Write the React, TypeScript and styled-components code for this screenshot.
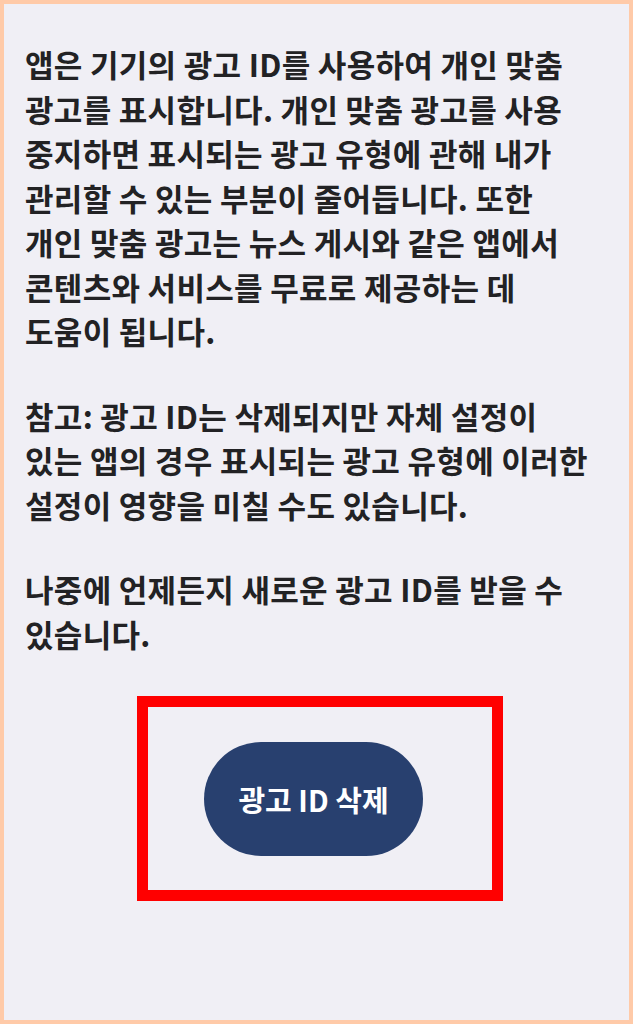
import React from "react";
import styled, { createGlobalStyle } from "styled-components";

const Global = createGlobalStyle`
  html, body { margin: 0; padding: 0; }
  body { background: #FFCAA8; }
`;

const Frame = styled.div`
  box-sizing: border-box;
  width: 633px;
  height: 1024px;
  border: 4px solid #FFCAA8;
  background: #F0EFF5;
  padding: 38px 0 0 21px;
  display: flex;
  flex-direction: column;
  font-family: "Noto Sans CJK KR", "Noto Sans", sans-serif;
  overflow: hidden;
`;

const Paragraph = styled.p`
  margin: 0 0 40px 0;
  font-size: 31px;
  line-height: 44.5px;
  font-weight: 700;
  color: #222224;
  letter-spacing: 0.3px;
`;

const Line = styled.span`
  display: block;
  white-space: nowrap;
`;

const Highlight = styled.div`
  align-self: flex-start;
  margin-left: 112px;
  box-sizing: border-box;
  width: 366px;
  height: 205px;
  border: 11px solid #FF0000;
  display: flex;
  align-items: center;
  padding-left: 56px;
`;

const PillButton = styled.button`
  width: 219px;
  height: 114px;
  padding: 0;
  border: none;
  border-radius: 57px;
  background: #28406F;
  color: #FFFFFF;
  font-family: "Noto Sans CJK KR", "Noto Sans", sans-serif;
  font-size: 29px;
  font-weight: 700;
  letter-spacing: 0;
  cursor: pointer;
`;

const paragraphs: string[][] = [
  [
    "앱은 기기의 광고 ID를 사용하여 개인 맞춤",
    "광고를 표시합니다. 개인 맞춤 광고를 사용",
    "중지하면 표시되는 광고 유형에 관해 내가",
    "관리할 수 있는 부분이 줄어듭니다. 또한",
    "개인 맞춤 광고는 뉴스 게시와 같은 앱에서",
    "콘텐츠와 서비스를 무료로 제공하는 데",
    "도움이 됩니다.",
  ],
  [
    "참고: 광고 ID는 삭제되지만 자체 설정이",
    "있는 앱의 경우 표시되는 광고 유형에 이러한",
    "설정이 영향을 미칠 수도 있습니다.",
  ],
  ["나중에 언제든지 새로운 광고 ID를 받을 수", "있습니다."],
];

export default function App() {
  return (
    <>
      <Global />
      <Frame>
        {paragraphs.map((lines, i) => (
          <Paragraph key={i}>
            {lines.map((l, j) => (
              <Line key={j}>{l}</Line>
            ))}
          </Paragraph>
        ))}
        <Highlight>
          <PillButton>광고 ID 삭제</PillButton>
        </Highlight>
      </Frame>
    </>
  );
}
